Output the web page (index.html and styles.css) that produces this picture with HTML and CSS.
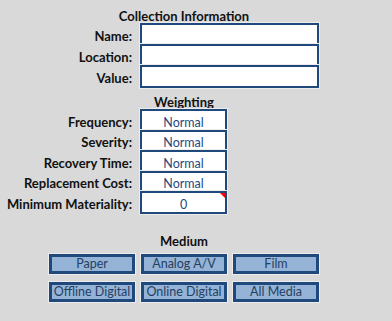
FILE: index.html
```html
<!DOCTYPE html>
<html lang="en">
  <head>
    <meta charset="UTF-8" />
    <meta name="viewport" content="width=device-width, initial-scale=1.0" />
    <link rel="stylesheet" href="styles.css">
    <title>Collection Information</title>
  </head>
  <body>
    <div class="sheet">
      <h2 class="section-title">Collection Information</h2>
      <div class="form form-info">
        <label class="label">Name:</label>
        <div class="cell"></div>
        <label class="label">Location:</label>
        <div class="cell"></div>
        <label class="label">Value:</label>
        <div class="cell"></div>
      </div>

      <h2 class="section-title section-title-weighting">Weighting</h2>
      <div class="form form-weighting">
        <label class="label">Frequency:</label>
        <div class="cell">Normal</div>
        <label class="label">Severity:</label>
        <div class="cell">Normal</div>
        <label class="label">Recovery Time:</label>
        <div class="cell">Normal</div>
        <label class="label">Replacement Cost:</label>
        <div class="cell">Normal</div>
        <label class="label">Minimum Materiality:</label>
        <div class="cell cell-comment">0</div>
      </div>

      <h2 class="section-title section-title-medium">Medium</h2>
      <div class="medium-grid">
        <button type="button" class="medium-button">Paper</button>
        <button type="button" class="medium-button">Analog A/V</button>
        <button type="button" class="medium-button">Film</button>
        <button type="button" class="medium-button">Offline Digital</button>
        <button type="button" class="medium-button">Online Digital</button>
        <button type="button" class="medium-button">All Media</button>
      </div>
    </div>
  </body>
</html>
```

FILE: styles.css
```css
html,
body {
  margin: 0;
  padding: 0;
}

body {
  width: 392px;
  height: 321px;
  overflow: hidden;

  background-color: #d9d9d9;
  font-family: Lato, "Liberation Sans", sans-serif;
  font-size: 12.5px;
  color: #111;
}

h2 {
  margin: 0;
  padding: 0;
}

.sheet {
  padding-top: 10px;
}

.section-title {
  width: 368px;
  line-height: 13px;
  font-size: 13px;
  font-weight: 700;
  text-align: center;
}

.section-title-weighting {
  margin-top: 8px;
}

.section-title-medium {
  margin-top: 21px;
}

.form {
  display: grid;
  column-gap: 8px;
  padding-top: 2px;
}

.form-info {
  grid-template-columns: 132px 179px;
  grid-auto-rows: 21px;
}

.form-weighting {
  grid-template-columns: 132px 87px;
  grid-auto-rows: 20.6px;
}

.label {
  align-self: end;
  padding-bottom: 3px;
  line-height: 14px;
  font-size: 13px;
  font-weight: 700;
  text-align: right;
  white-space: nowrap;
}

.cell {
  position: relative;
  display: flex;
  justify-content: center;
  align-items: flex-end;
  margin-top: -2px;

  line-height: 14px;
  color: #1f497d;
  background-color: #fff;
  border: 2px solid #1f497d;
  box-shadow: 0 0 0 1px #ececec;
}

.cell-comment::after {
  content: '';
  position: absolute;
  top: 0;
  right: 0;
  border-top: 5px solid #ff0000;
  border-left: 5px solid transparent;
}

.medium-grid {
  display: grid;
  grid-template-columns: repeat(3, 86px);
  grid-auto-rows: 20px;
  gap: 8px 6px;
  margin-top: 6px;
  margin-left: 49px;
}

.medium-button {
  display: flex;
  justify-content: center;
  align-items: center;
  padding: 0;

  font-family: inherit;
  font-size: 12.5px;
  line-height: 14px;
  color: #243f60;
  white-space: nowrap;
  background-color: #95b3d7;
  border: 3px solid #1f497d;
  border-radius: 0;
  box-shadow: 0 0 0 1px #ececec;
}
```
